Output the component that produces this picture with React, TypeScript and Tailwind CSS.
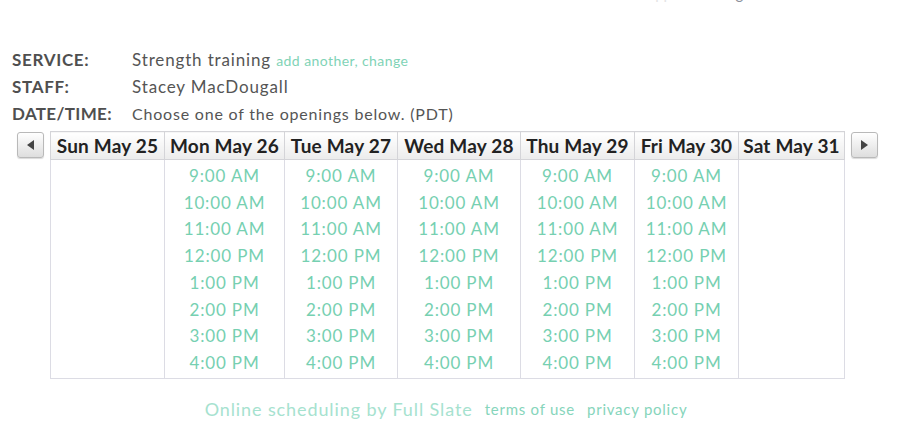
const DAYS = [
  { label: "Sun May 25", w: "w-[114px]", open: false },
  { label: "Mon May 26", w: "w-[120px]", open: true },
  { label: "Tue May 27", w: "w-[113px]", open: true },
  { label: "Wed May 28", w: "w-[123px]", open: true },
  { label: "Thu May 29", w: "w-[114px]", open: true },
  { label: "Fri May 30", w: "w-[104px]", open: true },
  { label: "Sat May 31", w: "w-[106px]", open: false },
];

const TIMES = [
  "9:00 AM",
  "10:00 AM",
  "11:00 AM",
  "12:00 PM",
  "1:00 PM",
  "2:00 PM",
  "3:00 PM",
  "4:00 PM",
];

function NavButton({ dir }: { dir: "prev" | "next" }) {
  return (
    <button className="flex h-[26px] w-[27px] items-center justify-center rounded-[3px] border border-[#b9b9b9] bg-gradient-to-b from-white to-[#dedede] shadow-[0_1px_1px_rgba(0,0,0,0.15)]">
      <span
        className={
          dir === "prev"
            ? "h-0 w-0 border-y-[5px] border-r-[7px] border-y-transparent border-r-[#444]"
            : "h-0 w-0 border-y-[5px] border-l-[7px] border-y-transparent border-l-[#444]"
        }
      />
    </button>
  );
}

export default function App() {
  return (
    <div className="h-[439px] w-[900px] overflow-hidden bg-white font-['Lato',sans-serif] text-[#444]">
      {/* bottom edge of the page header, scrolled off above */}
      <div className="-mt-[18px] h-[20px] pl-[590px] text-[15px] text-[#e4e4e4]">
        Book an appointment <span className="text-[#8a8f9a]">g</span>
      </div>

      <div className="mt-[44px] pl-[12px]">
        <div className="flex h-[27px] items-center">
          <div className="w-[120px] text-[17px] font-bold tracking-[0.04em] text-[#4f4f4f]">SERVICE:</div>
          <div className="text-[17px] tracking-[0.05em] text-[#555]">
            Strength training{" "}
            <span className="text-[14px] tracking-[0.03em] text-[#7fd3b6]">
              add another, <span>change</span>
            </span>
          </div>
        </div>
        <div className="flex h-[27px] items-center">
          <div className="w-[120px] text-[17px] font-bold tracking-[0.04em] text-[#4f4f4f]">STAFF:</div>
          <div className="text-[17px] tracking-[0.05em] text-[#555]">Stacey MacDougall</div>
        </div>
        <div className="flex h-[27px] items-center">
          <div className="w-[120px] whitespace-nowrap text-[17px] font-bold tracking-[0.02em] text-[#4f4f4f]">
            DATE/TIME:
          </div>
          <div className="text-[16px] tracking-[0.05em] text-[#555]">
            Choose one of the openings below. (PDT)
          </div>
        </div>
      </div>

      <div className="mt-[4px] flex items-start gap-[6px] pl-[17px]">
        <div className="pt-[1px]">
          <NavButton dir="prev" />
        </div>
        <table className="table-fixed border-collapse">
          <thead>
            <tr>
              {DAYS.map((d) => (
                <th
                  key={d.label}
                  className={`${d.w} h-[28px] whitespace-nowrap border border-[#d4d4d8] bg-gradient-to-b from-white to-[#ececec] p-0 text-center text-[19px] font-bold leading-none tracking-[0.01em] text-[#222]`}
                >
                  {d.label}
                </th>
              ))}
            </tr>
          </thead>
          <tbody>
            <tr>
              {DAYS.map((d) => (
                <td
                  key={d.label}
                  className="border border-[#dcdce4] px-0 pb-[1px] pt-[3px] align-top"
                >
                  {d.open &&
                    TIMES.map((t) => (
                      <div
                        key={t}
                        className="text-center text-[17px] leading-[26.7px] tracking-[0.05em] text-[#76d0b1]"
                      >
                        {t}
                      </div>
                    ))}
                </td>
              ))}
            </tr>
          </tbody>
        </table>
        <div className="pt-[1px]">
          <NavButton dir="next" />
        </div>
      </div>

      <div className="mt-[17px] flex justify-center gap-[12px] pr-[8px] text-[#a6e2cf]">
        <span className="text-[18px] tracking-[0.05em]">Online scheduling by Full Slate</span>
        <span className="pt-[2px] text-[15px] tracking-[0.05em] text-[#86d5bb]">terms of use</span>
        <span className="pt-[2px] text-[15px] tracking-[0.05em] text-[#86d5bb]">privacy policy</span>
      </div>
    </div>
  );
}
